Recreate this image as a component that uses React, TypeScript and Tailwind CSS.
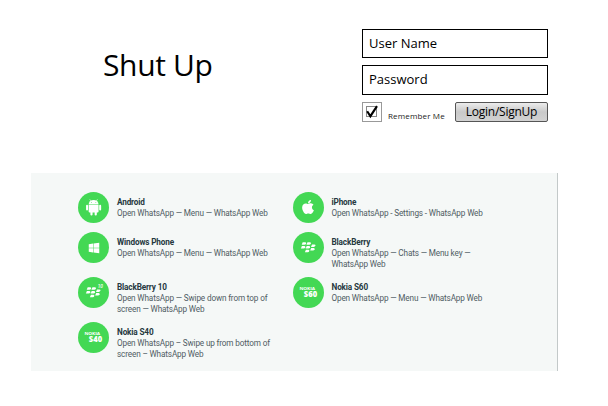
import type { ReactNode } from 'react';
import { FaApple, FaWindows } from 'react-icons/fa';

const AndroidIcon = () => (
  <svg viewBox="0 0 30 30" className="size-full" fill="#fff">
    <path d="M11.6 7.4l1 1.5M18.6 7.4l-1 1.5" stroke="#fff" strokeWidth=".6" strokeLinecap="round" />
    <path d="M10.3 12a4.8 4.2 0 0 1 9.6 0z" />
    <path d="M10.3 12.6h9.6v6.2a1 1 0 0 1-1 1h-7.6a1 1 0 0 1-1-1z" />
    <rect x="7.8" y="12.4" width="1.9" height="5.6" rx=".95" />
    <rect x="20.5" y="12.4" width="1.9" height="5.6" rx=".95" />
    <rect x="12" y="18" width="2.1" height="4.8" rx="1" />
    <rect x="16.1" y="18" width="2.1" height="4.8" rx="1" />
    <circle cx="12.9" cy="10.2" r=".45" fill="#43d854" />
    <circle cx="17.3" cy="10.2" r=".45" fill="#43d854" />
  </svg>
);

const berryKeys = [
  [8.9, 10], [13.5, 10],
  [8.1, 13.6], [12.7, 13.6], [17.9, 12],
  [17.1, 15.5], [12, 17.2],
];

const BerryIcon = ({ ten }: { ten?: boolean }) => (
  <svg viewBox="0 0 30 30" className="size-full" fill="#fff">
    {berryKeys.map(([x, y]) => (
      <path key={`${x}-${y}`} d={`M${x + 0.5} ${y}h2.3q1.2 .1 1 1.1q-.3 1.3-1.7 1.3h-2.6z`} />
    ))}
    {ten && (
      <text x="19" y="10.4" fontSize="4.6" fontStyle="italic" fontWeight="500" fontFamily="Roboto, sans-serif">10</text>
    )}
  </svg>
);

const NokiaIcon = ({ series }: { series: string }) => (
  <svg viewBox="0 0 30 30" className="size-full" fill="#fff" fontFamily="'Open Sans', sans-serif">
    <text x="6.2" y="12.8" fontSize="3.7" fontWeight="700" textLength="15.2" lengthAdjust="spacingAndGlyphs">NOKIA</text>
    <text x="10.5" y="19" fontSize="7.9" fontWeight="800" textLength="12.8" lengthAdjust="spacingAndGlyphs">{series}</text>
  </svg>
);

type ItemProps = { icon: ReactNode; name: string; lines: string[]; className: string };

const Item = ({ icon, name, lines, className }: ItemProps) => (
  <div className={`flex ${className}`}>
    <div className="flex size-[31px] shrink-0 items-center justify-center rounded-full bg-[#43d854] text-white">
      {icon}
    </div>
    <div className="ml-2 pt-[5px] text-[8.2px] leading-[11px] tracking-[-0.15px] whitespace-nowrap text-[#4f5c63]">
      <div className="font-bold text-[#26383f]">{name}</div>
      {lines.map((line) => (
        <div key={line}>{line}</div>
      ))}
    </div>
  </div>
);

export default function App() {
  return (
    <div className="h-[406px] w-[608px] overflow-hidden bg-white font-['Open_Sans',sans-serif] text-black">
      <header className="flex h-[173px] pt-[29px] pl-[103px]">
        <h1 className="w-[259px] pt-[14px] text-[30px] leading-[44px] tracking-[-0.35px]">Shut Up</h1>
        <div className="w-[186px]">
          <div className="flex h-[29px] items-center border border-black pl-[6px] text-[13px]">User Name</div>
          <div className="mt-[7px] flex h-[30px] items-center border border-black pb-px pl-[6px] text-[13px]">Password</div>
          <div className="mt-[7px] flex">
            <div className="flex size-5 items-center justify-center border border-[#999]">
              <svg viewBox="0 0 14 14" className="size-[14px]" fill="none">
                <rect x="1.5" y="1.5" width="10" height="10" stroke="#888" />
                <path d="M2.2 6.2L5.4 11.2L12 1.2" stroke="#000" strokeWidth="2.1" />
              </svg>
            </div>
            <span className="ml-[6px] w-[67px] pt-[8px] text-[8px] leading-[12px] tracking-[0.15px] whitespace-nowrap text-[#222]">Remember Me</span>
            <button className="flex h-5 w-[93px] items-center justify-center rounded-[2px] border border-[#555] bg-gradient-to-b from-[#ececec] via-[#c9c9c9] to-[#d2d2d2] text-[12px] tracking-[-0.25px] whitespace-nowrap">
              Login/SignUp
            </button>
          </div>
        </div>
      </header>
      <section className="ml-[31px] flex h-[198px] w-[527px] border-r border-[#c3c9c9] bg-[#f5f8f7] pt-[19px] pl-[47px] font-[Roboto,sans-serif]">
        <div className="w-[214.5px]">
          <Item className="h-[40px]" icon={<AndroidIcon />} name="Android" lines={['Open WhatsApp — Menu — WhatsApp Web']} />
          <Item className="h-[45px]" icon={<FaWindows className="size-[12px]" />} name="Windows Phone" lines={['Open WhatsApp — Menu — WhatsApp Web']} />
          <Item className="h-[45px]" icon={<BerryIcon ten />} name="BlackBerry 10" lines={['Open WhatsApp — Swipe down from top of', 'screen — WhatsApp Web']} />
          <Item className="h-[45px]" icon={<NokiaIcon series="S40" />} name="Nokia S40" lines={['Open WhatsApp – Swipe up from bottom of', 'screen – WhatsApp Web']} />
        </div>
        <div>
          <Item className="h-[40px]" icon={<FaApple className="mb-px size-[16px]" />} name="iPhone" lines={['Open WhatsApp - Settings - WhatsApp Web']} />
          <Item className="h-[45px]" icon={<BerryIcon />} name="BlackBerry" lines={['Open WhatsApp — Chats — Menu key —', 'WhatsApp Web']} />
          <Item className="h-[45px]" icon={<NokiaIcon series="S60" />} name="Nokia S60" lines={['Open WhatsApp — Menu — WhatsApp Web']} />
        </div>
      </section>
    </div>
  );
}
